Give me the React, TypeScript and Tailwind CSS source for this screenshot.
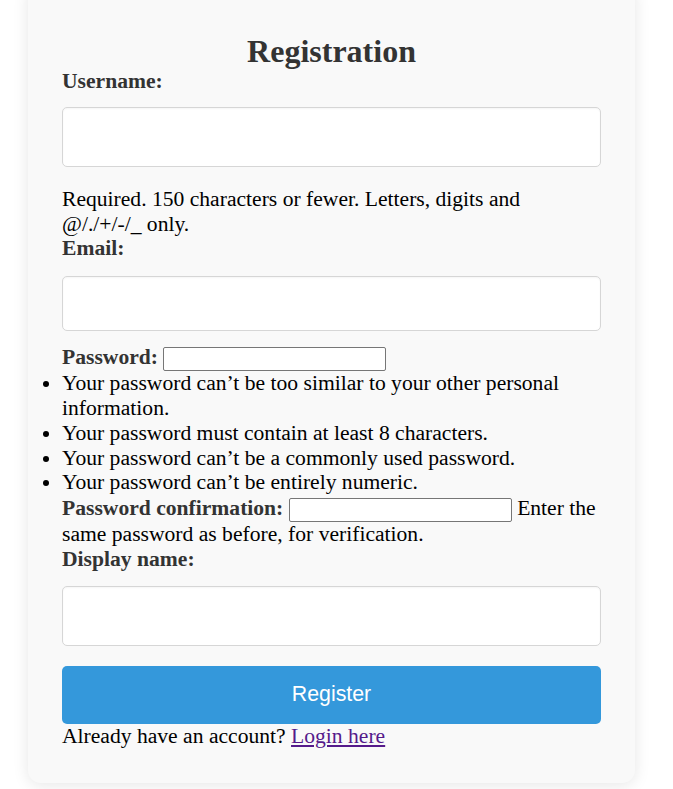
import React from 'react';

const fieldClass =
  "block w-full bg-white border border-[#d6d6d6] rounded-[5px] shadow-[inset_0_1px_2px_rgba(0,0,0,0.04)]";

const nativeInput =
  "inline-block align-middle w-[223px] h-[24px] bg-white border border-[#767676] rounded-[2px]";

const hints = [
  "Your password can’t be too similar to your other personal information.",
  "Your password must contain at least 8 characters.",
  "Your password can’t be a commonly used password.",
  "Your password can’t be entirely numeric.",
];

export default function App() {
  return (
    <div className="min-h-screen bg-white overflow-hidden font-['Liberation_Serif','Times_New_Roman',serif] text-[21.6px] leading-[24.8px] text-black">
      {/* card, scrolled a little past its top */}
      <div className="ml-[28px] w-[607px] -mt-[16px] pt-[50px] pb-[34px] px-[34px] bg-[#f9f9f9] rounded-[13px] shadow-[0_2px_16px_rgba(0,0,0,0.1)]">
        <h2 className="text-[32px] leading-[35px] font-bold text-[#333] text-center">Registration</h2>

        <form onSubmit={(e) => e.preventDefault()}>
          <label className="block font-bold text-[#333]">Username:</label>
          <input type="text" className={`${fieldClass} h-[60px] mt-[13px]`} />
          <p className="mt-[20px]">
            Required. 150 characters or fewer. Letters, digits and @/./+/-/_ only.
          </p>

          <label className="block font-bold text-[#333]">Email:</label>
          <input type="email" className={`${fieldClass} h-[55px] mt-[15px]`} />

          <p className="mt-[14px]">
            <label className="font-bold text-[#333]">Password:</label>{" "}
            <input type="password" className={nativeInput} />
          </p>
          <ul className="list-disc list-outside">
            {hints.map((h) => (
              <li key={h}>{h}</li>
            ))}
          </ul>
          <p className="mt-[1px]">
            <label className="font-bold text-[#333]">Password confirmation:</label>{" "}
            <input type="password" className={nativeInput} /> Enter the same password as before, for
            verification.
          </p>

          <label className="block font-bold text-[#333]">Display name:</label>
          <input type="text" className={`${fieldClass} h-[60px] mt-[14px]`} />

          <button
            type="submit"
            className="block w-full h-[58px] mt-[20px] bg-[#3498db] text-white rounded-[5px] font-['Liberation_Sans',Arial,sans-serif] text-[21.33px]"
          >
            Register
          </button>
        </form>

        <p>
          Already have an account?{" "}
          <a href="#" className="text-[#551a8b] underline">
            Login here
          </a>
        </p>
      </div>
    </div>
  );
}
